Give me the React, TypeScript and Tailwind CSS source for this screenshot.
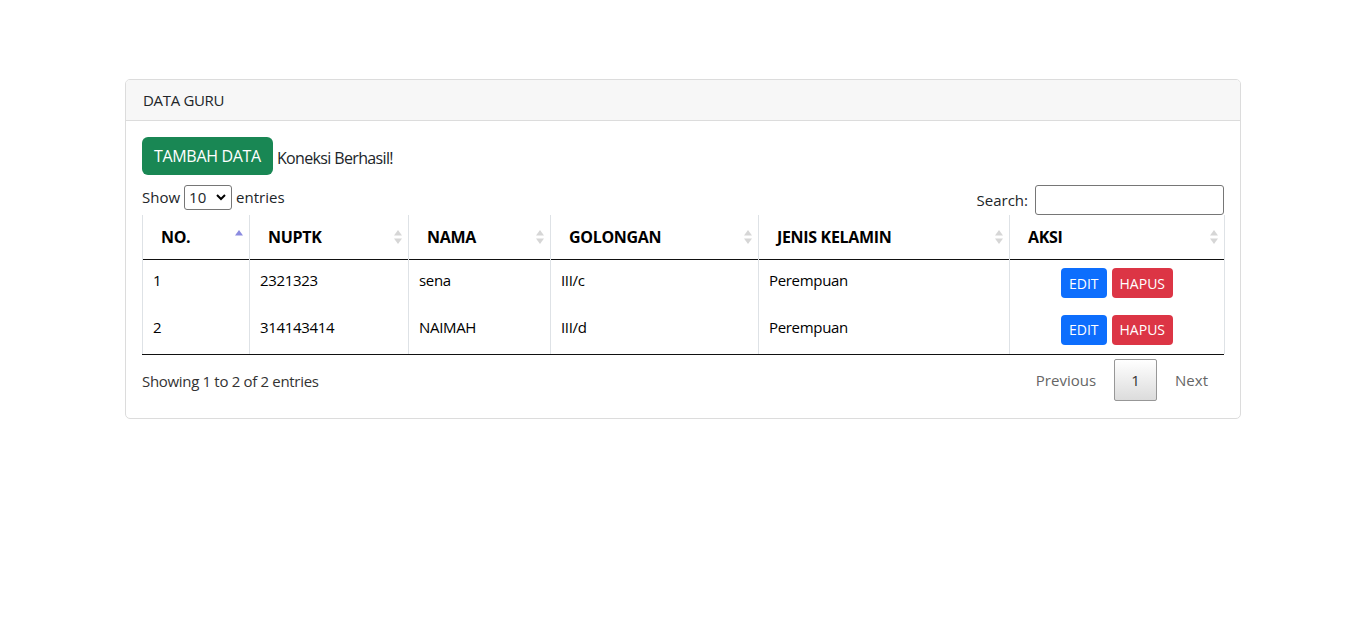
import React from "react";

const font = { fontFamily: '"Open Sans", "Noto Sans", sans-serif' };

function SortIcon({ active }: { active?: boolean }) {
  return (
    <svg width="8" height="14" viewBox="0 0 8 14" className="absolute right-[6px] top-[15px]">
      <polygon points="4,0 8,5.5 0,5.5" fill={active ? "#8b8be0" : "#d6d6d6"} />
      {!active && <polygon points="0,8.5 8,8.5 4,14" fill="#d6d6d6" />}
    </svg>
  );
}

const cols = [
  { label: "NO.", w: "w-[107px]", active: true },
  { label: "NUPTK", w: "w-[159px]" },
  { label: "NAMA", w: "w-[142px]" },
  { label: "GOLONGAN", w: "w-[208px]" },
  { label: "JENIS KELAMIN", w: "w-[251px]" },
  { label: "AKSI", w: "w-[215px]" },
];

const rows = [
  ["1", "2321323", "sena", "III/c", "Perempuan"],
  ["2", "314143414", "NAIMAH", "III/d", "Perempuan"],
];

export default function App() {
  return (
    <div className="min-h-[631px] bg-white text-[#212529] tracking-[-0.02em]" style={font}>
      <div className="pt-[79px] flex justify-center">
        <div className="w-[1116px] border border-[#dcdcdc] rounded-[5px] overflow-hidden">
          <div className="h-[41px] bg-[#f7f7f7] border-b border-[#dcdcdc] px-[17px] flex items-center text-[15px]">
            DATA GURU
          </div>
          <div className="px-[16px] pt-[16px] pb-[17px]">
            <div className="flex items-end">
              <button className="h-[38px] px-[12px] bg-[#198754] text-white rounded-[6px] text-[16px]">
                TAMBAH DATA
              </button>
              <span className="ml-[4px] mb-[5px] text-[16px] tracking-[-0.04em]">Koneksi Berhasil!</span>
            </div>
            <div className="mt-[10px] flex justify-between items-start">
              <div className="flex items-center text-[15px] h-[25px] tracking-normal">
                <span>Show</span>
                <div className="relative ml-[4px] w-[48px] h-[25px] border border-[#767676] rounded-[3px] flex items-center pl-[4px] text-[15px]">
                  10
                  <svg width="10" height="7" viewBox="0 0 10 7" className="absolute right-[5px] top-[8px]">
                    <path d="M1 1 L5 5 L9 1" stroke="#000" strokeWidth="2" fill="none" />
                  </svg>
                </div>
                <span className="ml-[4px]">entries</span>
              </div>
              <div className="flex items-center text-[15px]">
                <span className="mr-[7px] mt-[1px] tracking-normal">Search:</span>
                <div className="w-[189px] h-[30px] border border-[#767676] rounded-[3px]" />
              </div>
            </div>
            <table className="w-[1082px] border-collapse table-fixed text-[16px]">
              <thead>
                <tr className="border-b border-[#111]">
                  {cols.map((c, i) => (
                    <th
                      key={c.label}
                      className={`${c.w} relative h-[44px] py-[10px] pl-[18px] pr-[18px] text-left font-bold text-[16px] text-black border-l border-[#dee2e6] ${i === 5 ? "border-r" : ""}`}
                    >
                      {c.label}
                      <SortIcon active={c.active} />
                    </th>
                  ))}
                </tr>
              </thead>
              <tbody>
                {rows.map((r, ri) => (
                  <tr key={r[0]} className={ri === 0 ? "h-[47px]" : "h-[47.5px]"}>
                    {r.map((v, i) => (
                      <td key={i} className="align-top pt-[9px] px-[10px] border-l border-[#dee2e6] text-black text-[15px]">
                        {v}
                      </td>
                    ))}
                    <td className="align-top pt-[8px] px-[10px] border-l border-r border-[#dee2e6]">
                      <div className="flex justify-center gap-[5px]">
                        <button className="h-[30px] px-[8px] bg-[#0d6efd] text-white rounded-[4px] text-[14px] tracking-normal">EDIT</button>
                        <button className="h-[30px] px-[8px] bg-[#dc3545] text-white rounded-[4px] text-[14px] tracking-normal">HAPUS</button>
                      </div>
                    </td>
                  </tr>
                ))}
              </tbody>
            </table>
            <div className="border-t border-[#111] flex justify-between items-start">
              <div className="pt-[15px] text-[15px] text-[#333]">Showing 1 to 2 of 2 entries</div>
              <div className="pt-[4px] flex items-center text-[15px] text-[#666] tracking-normal">
                <span className="px-[16px] h-[42px] flex items-center">Previous</span>
                <span className="ml-[2px] w-[43px] h-[42px] flex items-center justify-center border border-[#979797] rounded-[2px] text-[#333] bg-gradient-to-b from-white to-[#dcdcdc]">
                  1
                </span>
                <span className="ml-[2px] px-[16px] h-[42px] flex items-center">Next</span>
              </div>
            </div>
          </div>
        </div>
      </div>
    </div>
  );
}
